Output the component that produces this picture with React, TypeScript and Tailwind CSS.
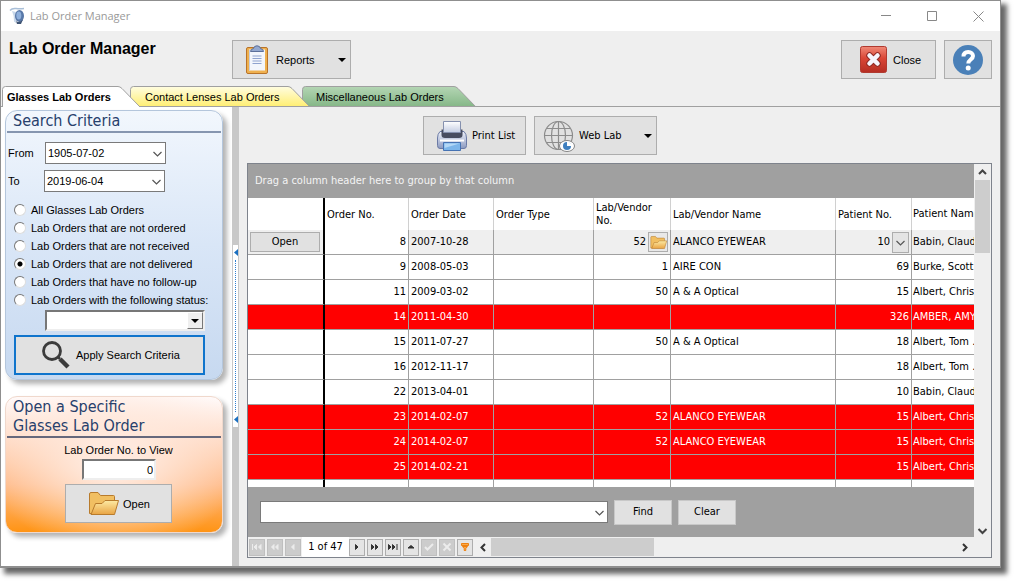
import { useState } from "react";
import type { ReactNode } from "react";

type Order = {
  no: number;
  date: string;
  vendorNo?: number;
  vendor?: string;
  patientNo: number;
  patient: string;
  late?: boolean;
};

const orders: Order[] = [
  { no: 8, date: "2007-10-28", vendorNo: 52, vendor: "ALANCO EYEWEAR", patientNo: 10, patient: "Babin, Claud" },
  { no: 9, date: "2008-05-03", vendorNo: 1, vendor: "AIRE CON", patientNo: 69, patient: "Burke, Scott" },
  { no: 11, date: "2009-03-02", vendorNo: 50, vendor: "A & A Optical", patientNo: 15, patient: "Albert, Chris" },
  { no: 14, date: "2011-04-30", patientNo: 326, patient: "AMBER, AMY", late: true },
  { no: 15, date: "2011-07-27", vendorNo: 50, vendor: "A & A Optical", patientNo: 18, patient: "Albert, Tom ." },
  { no: 16, date: "2012-11-17", patientNo: 18, patient: "Albert, Tom ." },
  { no: 22, date: "2013-04-01", patientNo: 10, patient: "Babin, Claud" },
  { no: 23, date: "2014-02-07", vendorNo: 52, vendor: "ALANCO EYEWEAR", patientNo: 15, patient: "Albert, Chris", late: true },
  { no: 24, date: "2014-02-07", vendorNo: 52, vendor: "ALANCO EYEWEAR", patientNo: 15, patient: "Albert, Chris", late: true },
  { no: 25, date: "2014-02-21", patientNo: 15, patient: "Albert, Chris", late: true },
];

const filters = [
  "All Glasses Lab Orders",
  "Lab Orders that are not ordered",
  "Lab Orders that are not received",
  "Lab Orders that are not delivered",
  "Lab Orders that have no follow-up",
  "Lab Orders with the following status:",
];

export default function App() {
  return (
    <div className="h-screen min-h-[583px] bg-white pr-4 pb-[15px] font-['Liberation_Sans',Arial,sans-serif] text-[11px] leading-4 text-black">
      <div className="flex h-full flex-col border border-[#8f8f8f] border-b-2 bg-[#efefef] shadow-[5px_5px_5px_1px_rgba(0,0,0,0.6)]">
        <TitleBar />
        <Header />
        <Tabs />
        <main className="flex min-h-0 flex-1">
          <Sidebar />
          <Splitter />
          <section className="flex min-w-0 flex-1 flex-col px-2 pb-2">
            <div className="flex gap-2 pt-[9px] pb-2 pl-44 font-['DejaVu_Sans_Condensed',Tahoma,sans-serif]">
              <ToolButton className="w-[103px] pl-3">
                <PrinterIcon />
                <span>Print List</span>
              </ToolButton>
              <ToolButton className="w-[123px] pl-2">
                <GlobeIcon />
                <span>Web Lab</span>
                <CaretDown className="mr-1 ml-auto" />
              </ToolButton>
            </div>
            <Grid />
          </section>
        </main>
      </div>
    </div>
  );
}

function TitleBar() {
  return (
    <div className="flex h-[30px] shrink-0 items-center bg-white pl-2">
      <svg width="17" height="18" viewBox="0 0 17 18" fill="none">
        <path d="M1 3.500Q3 1 7 1.500T15 1.500" stroke="#a9bfd8" strokeWidth="1.500" />
        <path d="M3 4L7 5L7 16L5 14.500Q5 8 3 4Z" fill="#c9d8ea" />
        <ellipse cx="10.500" cy="9" rx="4.500" ry="6" fill="#5878a8" />
        <ellipse cx="9.800" cy="8.500" rx="2.500" ry="4" fill="#8fb0dc" />
        <path d="M7 14Q10 16.500 14 12.500L12 17H8Z" fill="#3e5372" />
      </svg>
      <span className="ml-1 font-['Open_Sans','Segoe_UI',sans-serif] text-[11px] text-[#999]">Lab Order Manager</span>
      <div className="ml-auto flex items-center gap-9 pr-4 text-[#888]">
        <button aria-label="Minimize">
          <svg width="10" height="10" viewBox="0 0 10 10"><path d="M0 4.500H10" stroke="currentColor" /></svg>
        </button>
        <button aria-label="Maximize">
          <svg width="10" height="10" viewBox="0 0 10 10"><path d="M.5.5H9.500V9.500H.5Z" fill="none" stroke="currentColor" /></svg>
        </button>
        <button aria-label="Close window">
          <svg width="11" height="11" viewBox="0 0 11 11"><path d="M.5.5L10.500 10.500M10.500.5L.5 10.500" stroke="currentColor" /></svg>
        </button>
      </div>
    </div>
  );
}

function Header() {
  return (
    <header className="flex h-[55px] shrink-0 items-start gap-2 pt-[9px] pr-2 pl-2">
      <h1 className="w-[215px] text-base leading-[18px] font-bold">Lab Order Manager</h1>
      <ToolButton className="w-[119px] pl-3">
        <ClipboardIcon />
        <span className="ml-[2px]">Reports</span>
        <CaretDown className="mr-1 ml-auto" />
      </ToolButton>
      <ToolButton className="ml-auto w-[95px] pl-[18px]">
        <svg width="27" height="27" viewBox="0 0 27 27">
          <defs>
            <linearGradient id="red" x2="0" y2="1">
              <stop stopColor="#f08a78" />
              <stop offset=".45" stopColor="#da4636" />
              <stop offset="1" stopColor="#b52d23" />
            </linearGradient>
          </defs>
          <rect x=".5" y=".5" width="26" height="26" rx="2" fill="url(#red)" stroke="#b03a30" />
          <path d="M9.500 9.500L17.500 17.500M17.500 9.500L9.500 17.500" stroke="#8f2a25" strokeWidth="6.500" strokeLinecap="round" />
          <path d="M9.500 9.500L17.500 17.500M17.500 9.500L9.500 17.500" stroke="#f6f4fb" strokeWidth="4.500" strokeLinecap="round" />
        </svg>
        <span className="ml-[2px]">Close</span>
      </ToolButton>
      <ToolButton className="w-12 justify-center" label="Help">
        <svg width="30" height="30" viewBox="0 0 30 30" fill="none">
          <circle cx="15" cy="15" r="15" fill="#4a80b8" />
          <path d="M10.500 11.500C10.500 8.500 12.500 7 15.200 7C18.200 7 20 8.800 20 11C20 14.500 15.300 14.500 15.300 18.500" stroke="#fff" strokeWidth="4" />
          <circle cx="15.200" cy="23" r="2.500" fill="#fff" />
        </svg>
      </ToolButton>
    </header>
  );
}

function Tabs() {
  return (
    <nav className="flex h-[21px] shrink-0 border-b border-[#a0a0a0] pl-px leading-[22px]">
      <button className="relative z-20 h-[21px] w-[138px] pl-[5px] text-left font-bold">
        <TabShape width={138} from="#ffffff" to="#ffffff" />
        <span className="relative">Glasses Lab Orders</span>
      </button>
      <button className="relative z-10 -ml-[10px] h-[21px] w-[180px] pl-[15px] text-left">
        <TabShape width={180} from="#fffde0" to="#ffee70" line />
        <span className="relative">Contact Lenses Lab Orders</span>
      </button>
      <button className="relative -ml-2 h-[21px] w-[174px] pl-[14px] text-left">
        <TabShape width={174} from="#b4d6b4" to="#84b686" line />
        <span className="relative">Miscellaneous Lab Orders</span>
      </button>
    </nav>
  );
}

function TabShape({ width, from, to, line }: { width: number; from: string; to: string; line?: boolean }) {
  const id = `tab${width}`;
  return (
    <svg className="absolute top-0 left-0" width={width} height="21" viewBox={`0 0 ${width} 21`}>
      <defs>
        <linearGradient id={id} x2="0" y2="1">
          <stop stopColor={from} />
          <stop offset="1" stopColor={to} />
        </linearGradient>
      </defs>
      <path
        d={`M 0.5 21 V 3.5 Q 0.5 0.5 3.5 0.5 H ${width - 22} Q ${width - 20} 0.5 ${width - 18} 2.5 L ${width} 21`}
        fill={`url(#${id})`}
        stroke="#a0a0a0"
      />
      {line && <path d={`M 0 20.5 H ${width}`} stroke="#a0a0a0" />}
    </svg>
  );
}

function Sidebar() {
  const [filter, setFilter] = useState(3);

  return (
    <aside className="flex w-[231px] shrink-0 flex-col gap-4 bg-white pt-[3px] pr-[9px] pl-1">
      {/* SEARCH */}
      <div className="flex h-[270px] flex-col rounded-xl border border-[#b4c6dc] bg-linear-to-b from-[#f2f7fd] via-[#d9e6f7] to-[#c7d9f0] shadow-[4px_4px_5px_rgba(0,0,0,0.3)]">
        <h2 className="mx-px h-[22px] border-b-2 border-[#8696b0] pl-[6px] font-['DejaVu_Sans_Condensed',Tahoma,sans-serif] text-base leading-[19px] text-[#27406c]">
          Search Criteria
        </h2>
        <div className="mt-[9px] flex items-center pl-[2px]">
          <label htmlFor="from" className="w-[37px]">From</label>
          <Select id="from" value="1905-07-02" className="h-[22px] w-[121px]" />
        </div>
        <div className="mt-[6px] flex items-center pl-[2px]">
          <label htmlFor="to" className="w-[36px]">To</label>
          <Select id="to" value="2019-06-04" className="h-[22px] w-[121px]" />
        </div>
        <div className="mt-[9px] pl-2">
          {filters.map((f, i) => (
            <label key={f} className="flex h-[18px] items-center gap-[5px] whitespace-nowrap">
              <input
                type="radio"
                name="filter"
                checked={filter === i}
                onChange={() => setFilter(i)}
                className="size-3 appearance-none rounded-full border border-t-[#777] border-r-[#ddd] border-b-[#ddd] border-l-[#777] bg-white checked:bg-[radial-gradient(circle,#000_2px,#fff_3px)]"
              />
              {f}
            </label>
          ))}
        </div>
        <div className="relative mt-px ml-[39px] w-40">
          <select
            aria-label="Status"
            className="block h-[21px] w-full appearance-none border-2 border-t-[#777] border-r-[#eee] border-b-[#eee] border-l-[#777] bg-white"
          />
          <span className="pointer-events-none absolute top-[2px] right-[2px] flex h-[17px] w-4 items-center justify-center border border-t-white border-r-[#777] border-b-[#777] border-l-white bg-[#efefef]">
            <CaretDown />
          </span>
        </div>
        <button className="mt-1 ml-2 flex h-10 w-[191px] items-center border-2 border-[#0f74cc] bg-[#e1e1e1] pl-[26px]">
          <svg width="28" height="28" viewBox="0 0 28 28" fill="none" stroke="#3c3c3c">
            <circle cx="10" cy="10" r="8.500" strokeWidth="2.800" />
            <path d="M16 16L18 18" strokeWidth="2.500" />
            <path d="M18 18L26 26" strokeWidth="4.500" />
          </svg>
          <span className="ml-[6px]">Apply Search Criteria</span>
        </button>
      </div>

      {/* OPEN BY NUMBER */}
      <div className="flex h-[137px] flex-col rounded-xl border border-[#f0d8cc] bg-[radial-gradient(ellipse_60%_70%_at_50%_45%,#ffe9dd_20%,transparent),linear-gradient(#fffafa,#ffdcc8_30%,#ffb986_65%,#ff9414)] shadow-[4px_4px_5px_rgba(0,0,0,0.3)]">
        <h2 className="mx-px h-[41px] border-b-2 border-[#66687c] pl-[6px] font-['DejaVu_Sans_Condensed',Tahoma,sans-serif] text-base leading-[19px] text-[#27406c]">
          Open a Specific
          <br />
          Glasses Lab Order
        </h2>
        <label htmlFor="orderNo" className="mt-1 pl-[9px] text-center">Lab Order No. to View</label>
        <input
          id="orderNo"
          defaultValue="0"
          className="mt-px ml-[76px] h-[21px] w-[74px] border-2 border-t-[#777] border-r-[#eee] border-b-[#eee] border-l-[#777] bg-white px-px text-right"
        />
        <button className="mt-1 ml-[59px] flex h-[39px] w-[107px] items-center gap-1 border border-[#adadad] bg-[#e1e1e1] pl-[22px]">
          <FolderIcon size={31} />
          <span>Open</span>
        </button>
      </div>
    </aside>
  );
}

function Splitter() {
  return (
    <div className="flex w-[7px] shrink-0 flex-col bg-[#c8c8c8]">
      <div className="mt-[137px] flex h-[184px] flex-col items-center justify-between border border-[#c8c8c8] bg-white py-1">
        <SmallArrow />
        <div className="my-1 flex-1 border-l border-dotted border-[#2f7fd0]" />
        <SmallArrow />
      </div>
    </div>
  );
}

function SmallArrow() {
  return (
    <svg width="4" height="7" viewBox="0 0 4 7"><path d="M4 0V7L0 3.500Z" fill="#1a6fc0" /></svg>
  );
}

function Grid() {
  const head = "border-r border-[#d0d0d0] px-[2px] text-left leading-[13px] font-normal";

  return (
    <div className="flex min-h-0 flex-1 flex-col border border-[#7e838c] bg-[#efefef] font-['DejaVu_Sans_Condensed',Tahoma,sans-serif]">
      <div className="flex min-h-0 flex-1">
        <div className="flex min-w-0 flex-1 flex-col bg-[#a0a0a0]">
          <p className="h-[34px] shrink-0 pl-[7px] leading-[34px] text-[#f4f4f4]">
            Drag a column header here to group by that column
          </p>
          <div className="min-h-0 flex-1 overflow-hidden bg-white">
            <table className="w-full table-fixed border-separate border-spacing-0 whitespace-nowrap">
              <colgroup>
                <col className="w-[77px]" />
                <col className="w-[84px]" />
                <col className="w-[85px]" />
                <col className="w-[100px]" />
                <col className="w-[77px]" />
                <col className="w-[165px]" />
                <col className="w-[76px]" />
                <col />
              </colgroup>
              <thead>
                <tr className="h-8">
                  <th className="border-r-2 border-black" />
                  <th className={head}>Order No.</th>
                  <th className={head}>Order Date</th>
                  <th className={head}>Order Type</th>
                  <th className={head}>Lab/Vendor<br />No.</th>
                  <th className={head}>Lab/Vendor Name</th>
                  <th className={head}>Patient No.</th>
                  <th className="overflow-hidden pl-px text-left font-normal">Patient Name</th>
                </tr>
              </thead>
              <tbody>
                {orders.map((o, i) => (
                  <Row key={o.no} order={o} active={i === 0} />
                ))}
                <tr className="h-[25px]">
                  <td className="border-r-2 border-black" />
                  {[1, 2, 3, 4, 5, 6].map((n) => (
                    <td key={n} className="border-r border-[#a0a0a0]" />
                  ))}
                  <td />
                </tr>
              </tbody>
            </table>
          </div>
          <div className="flex h-[50px] shrink-0 items-center gap-[6px] pl-3">
            <Select id="find" value="" label="Find text" className="h-[22px] w-[348px]" />
            <button className="h-[25px] w-[58px] border border-[#c8c8c8] bg-[#e1e1e1]">Find</button>
            <button className="h-[25px] w-[58px] border border-[#c8c8c8] bg-[#e1e1e1]">Clear</button>
          </div>
        </div>

        {/* VERTICAL SCROLLBAR */}
        <div className="flex w-[17px] shrink-0 flex-col items-center pt-[2px] text-[#444]">
          <button aria-label="Scroll up"><Chevron dir="up" bold /></button>
          <div className="mt-px h-[73px] w-[15px] bg-[#cdcdcd]" />
          <button aria-label="Scroll down" className="mt-auto"><Chevron dir="down" bold /></button>
        </div>
      </div>
      <Navigator />
    </div>
  );
}

function Row({ order, active }: { order: Order; active: boolean }) {
  const tone = order.late ? "bg-[#ff0000] text-white" : active ? "bg-[#efefef]" : "bg-white";
  const cell = `border-r border-b border-[#a0a0a0] px-[2px] ${tone}`;

  return (
    <tr className="h-[25px]">
      <td className={`border-r-2 border-b border-r-black border-b-[#a0a0a0] px-[2px] ${tone}`}>
        {active && (
          <button className="block h-5 w-[70px] border border-[#adadad] bg-[#e1e1e1]">Open</button>
        )}
      </td>
      <td className={`${cell} text-right ${active ? "bg-white" : ""}`}>{order.no}</td>
      <td className={cell}>{order.date}</td>
      <td className={cell} />
      <td className={`${cell} text-right`}>
        <div className="flex items-center justify-end gap-[2px]">
          {order.vendorNo}
          {active && (
            <button aria-label="Choose vendor" className="flex h-5 w-5 items-center justify-center border border-[#adadad] bg-[#e8e8e8]">
              <FolderIcon size={17} />
            </button>
          )}
        </div>
      </td>
      <td className={cell}>{order.vendor}</td>
      <td className={`${cell} text-right`}>
        <div className="flex items-center justify-end gap-[2px]">
          {order.patientNo}
          {active && (
            <button aria-label="Choose patient" className="flex h-[21px] w-[17px] items-center justify-center border border-[#adadad] bg-[#e4e4e4] text-[#555]">
              <Chevron dir="down" />
            </button>
          )}
        </div>
      </td>
      <td className={`overflow-hidden border-b border-[#a0a0a0] pl-px ${tone}`}>{order.patient}</td>
    </tr>
  );
}

function Navigator() {
  return (
    <div className="flex h-5 shrink-0 items-center text-[#333]">
      <div className="flex gap-[2px] px-px">
        <NavButton label="First" off><path d="M3.500 5V11M7.500 5.500V10.500L5 8ZM12 5.500V10.500L9.500 8Z" /></NavButton>
        <NavButton label="Previous page" off><path d="M7 5.500V10.500L4.500 8ZM11 5.500V10.500L8.500 8Z" /></NavButton>
        <NavButton label="Previous" off><path d="M9 5.500V10.500L6.500 8Z" /></NavButton>
      </div>
      <span className="w-[47px] self-stretch bg-white text-center leading-5 text-black">1 of 47</span>
      <div className="flex gap-[2px]">
        <NavButton label="Next"><path d="M6.500 5.500V10.500L9 8Z" /></NavButton>
        <NavButton label="Next page"><path d="M4.500 5.500V10.500L7 8ZM8.500 5.500V10.500L11 8Z" /></NavButton>
        <NavButton label="Last"><path d="M3.500 5.500V10.500L6 8ZM7.500 5.500V10.500L10 8ZM12 5V11" /></NavButton>
        <NavButton label="Edit"><path d="M5 9H11L8 6.500Z" /></NavButton>
        <NavButton label="Post" off><path d="M4 8L6.500 10.500L12 5" fill="none" strokeWidth="2" /></NavButton>
        <NavButton label="Cancel" off><path d="M4.500 4.500L11.500 11.500M11.500 4.500L4.500 11.500" strokeWidth="2" /></NavButton>
        <NavButton label="Filter">
          <path d="M4.500 4.500H11.500V6.500H4.500ZM5.500 7.500H10.500L8.800 9.500V11.500H7.200V9.500Z" fill="#f9a94a" stroke="#ee8010" />
        </NavButton>
      </div>
      <button aria-label="Scroll left" className="ml-1"><Chevron dir="left" bold /></button>
      <div className="ml-px h-[18px] w-[163px] bg-[#cdcdcd]" />
      <button aria-label="Scroll right" className="mr-5 ml-auto"><Chevron dir="right" bold /></button>
    </div>
  );
}

function NavButton({ label, off, children }: { label: string; off?: boolean; children: ReactNode }) {
  return (
    <button
      aria-label={label}
      disabled={off}
      className={`flex h-[17px] w-4 items-center justify-center border ${
        off ? "border-[#bfbfbf] bg-[#cccccc] text-[#ececec]" : "border-[#adadad] bg-[#e4e4e4]"
      }`}
    >
      <svg className="shrink-0" width="16" height="16" viewBox="0 0 16 16" fill="currentColor" stroke="currentColor" strokeWidth="1">
        {children}
      </svg>
    </button>
  );
}

function ToolButton({ className, label, children }: { className: string; label?: string; children: ReactNode }) {
  return (
    <button
      aria-label={label}
      className={`flex h-[39px] shrink-0 items-center gap-1 border border-[#adadad] bg-[#e1e1e1] whitespace-nowrap ${className}`}
    >
      {children}
    </button>
  );
}

function Select({ id, value, label, className }: { id: string; value: string; label?: string; className: string }) {
  return (
    <div className={`relative ${className}`}>
      <select
        id={id}
        aria-label={label}
        defaultValue={value}
        className="block h-full w-full appearance-none border border-[#7a7a7a] bg-white pl-[2px]"
      >
        <option>{value}</option>
      </select>
      <span className="pointer-events-none absolute inset-y-0 right-[2px] flex items-center text-[#555]">
        <Chevron dir="down" />
      </span>
    </div>
  );
}

function Chevron({ dir, bold }: { dir: "up" | "down" | "left" | "right"; bold?: boolean }) {
  const paths = {
    up: "M3 8L6.500 4.500L10 8",
    down: "M2.500 5L6.500 9L10.500 5",
    left: "M8 3L4.500 6.500L8 10",
    right: "M5 3L8.500 6.500L5 10",
  };
  return (
    <svg className="block" width="13" height="13" viewBox="0 0 13 13" fill="none">
      <path d={paths[dir]} stroke="currentColor" strokeWidth={bold ? 2 : 1.2} />
    </svg>
  );
}

function CaretDown({ className }: { className?: string }) {
  return (
    <svg className={className} width="8" height="4" viewBox="0 0 8 4"><path d="M0 0H8L4 4Z" fill="#000" /></svg>
  );
}

function ClipboardIcon() {
  return (
    <svg width="25" height="30" viewBox="0 0 25 30">
      <rect x="1.500" y="2.500" width="21" height="26" rx="1.500" fill="#efb04e" stroke="#b8732a" />
      <path d="M4 4.500H20V25.500H4Z" fill="#f3f6fc" />
      <path d="M4 25.500V5H5V25.500Z" fill="#c7cfe0" />
      <path d="M7.500 11H16.500M7.500 13.500H16.500M7.500 16H16.500M7.500 18.500H16.500" stroke="#8fa3cf" />
      <path d="M5.500 6.500Q5.500 4 8.500 3.500Q9 .8 12 .8Q15 .8 15.500 3.500Q18.500 4 18.500 6.500Z" fill="#93a8cf" stroke="#5c6f99" />
    </svg>
  );
}

function PrinterIcon() {
  return (
    <svg width="32" height="32" viewBox="0 0 32 32">
      <defs>
        <linearGradient id="case" x2="0" y2="1">
          <stop stopColor="#eef1fa" />
          <stop offset="1" stopColor="#8c9ac0" />
        </linearGradient>
        <linearGradient id="sheet" x2="0" y2="1">
          <stop stopColor="#ffffff" />
          <stop offset="1" stopColor="#c3cce2" />
        </linearGradient>
      </defs>
      <path d="M4 11.500H28Q30.500 14 30.500 18V25.500Q30.500 28.500 28 28.500H4Q1.500 28.500 1.500 25.500V18Q1.500 14 4 11.500Z" fill="url(#case)" stroke="#6b7aa5" />
      <path d="M5.500 9.500H26.500V15Q26.500 18 23 18H9Q5.500 18 5.500 15Z" fill="#474c60" />
      <path d="M7.500 1.500H24.500V12.500H7.500Z" fill="url(#sheet)" stroke="#8590ae" />
      <path d="M4 20.500H28" stroke="#fff" strokeWidth="2" />
      <path d="M7.500 22.500H24.500V30.500H7.500Z" fill="#7db6ea" stroke="#4673b3" />
      <path d="M8.500 23.500H23.500L8.500 28Z" fill="#b4d8f6" />
    </svg>
  );
}

function GlobeIcon() {
  return (
    <svg width="32" height="32" viewBox="0 0 32 32" fill="none">
      <g stroke="#8c8c8c" strokeWidth="1.200">
        <circle cx="15.500" cy="15.500" r="14" />
        <ellipse cx="15.500" cy="15.500" rx="7" ry="14" />
        <path d="M15.500 1.500V29.500M1.500 15.500H29.500M4 8.500H27M4 22.500H27" />
      </g>
      <ellipse cx="24" cy="26" rx="7.500" ry="5.500" fill="#fff" stroke="#858585" />
      <circle cx="24" cy="26" r="4" fill="#3f7fbf" />
      <path d="M24 26V21.500A4.500 4.500 0 0 1 28.500 26Z" fill="#fff" />
    </svg>
  );
}

function FolderIcon({ size }: { size: number }) {
  return (
    <svg className="shrink-0" width={size} height={size} viewBox="0 0 31 31">
      <defs>
        <linearGradient id="folder" x2="0" y2="1">
          <stop stopColor="#fdeaa4" />
          <stop offset="1" stopColor="#e9a443" />
        </linearGradient>
      </defs>
      <path d="M1.500 25.500V6Q1.500 4.500 3 4.500H10L12.500 7.500H25.500Q26.500 7.500 26.500 8.500V14L24 25.500Z" fill="#f1bf62" stroke="#b87b2c" />
      <path d="M3 26.500L7.500 15.500H14L17 12.500H30.500L26.500 26.500Z" fill="url(#folder)" stroke="#b87b2c" />
    </svg>
  );
}
